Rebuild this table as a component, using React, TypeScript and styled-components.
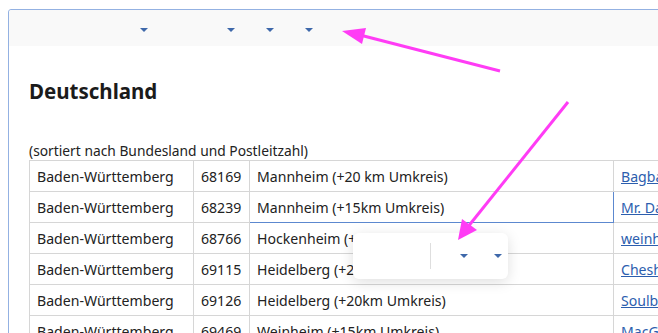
import styled, { createGlobalStyle } from 'styled-components';

const GlobalStyle = createGlobalStyle`
  html, body {
    margin: 0;
    padding: 0;
    background: #ffffff;
    overflow: hidden;
  }
  body {
    font-family: "Segoe UI", "Noto Sans", "Open Sans", sans-serif;
    color: #202020;
  }
`

const Page = styled.div`
  position: relative;
  width: 658px;
  height: 333px;
  overflow: hidden;
  padding: 9px 0 0 8px;
  box-sizing: border-box;
`

const Editor = styled.div`
  width: 700px;
  height: 400px;
  border: 1px solid #93b1e2;
  border-radius: 3px;
  box-sizing: border-box;
`

const Toolbar = styled.div`
  height: 36px;
  display: flex;
  align-items: center;
  background: #f9f9f9;
  border-radius: 3px 3px 0 0;
`

const Dropdown = styled.div<{ $width: number }>`
  width: ${p => p.$width}px;
  height: 24px;
  display: flex;
  align-items: center;
  justify-content: flex-end;
  padding-top: 3px;
  box-sizing: border-box;
`

const Caret = styled.span`
  width: 0;
  height: 0;
  border-left: 4px solid transparent;
  border-right: 4px solid transparent;
  border-top: 4px solid #3e68aa;
`

const Content = styled.div`
  padding: 0 0 0 20px;
`

const Heading = styled.h2`
  margin: 30px 0 0;
  font-size: 20.5px;
  line-height: 30px;
  font-weight: 700;
  color: #1b1b1b;
`

const Note = styled.p`
  margin: 36px 0 0;
  font-size: 13.8px;
  line-height: 17px;
  color: #222;
`

const Table = styled.table`
  margin-top: 1px;
  border-collapse: collapse;
  table-layout: fixed;
  width: 800px;
  font-size: 14.1px;
  color: #222;
`

const Cell = styled.td<{ $width?: number; $focused?: boolean }>`
  ${p => (p.$width ? `width: ${p.$width}px;` : '')}
  height: 31px;
  padding: 1px 7px 0;
  border: 1px solid ${p => (p.$focused ? '#5c88cf' : '#d6d6d6')};
  white-space: nowrap;
  overflow: hidden;
  box-sizing: border-box;
`

const Link = styled.a`
  color: #2c5eae;
  text-decoration: underline;
`

const Popup = styled.div`
  position: absolute;
  left: 353px;
  top: 233px;
  width: 155px;
  height: 46px;
  background: #ffffff;
  border-radius: 6px;
  box-shadow: 0 3px 14px rgba(0, 0, 0, 0.13);
  display: flex;
  align-items: center;
`

const Separator = styled.span`
  width: 1px;
  height: 26px;
  margin-left: 77px;
  background: #dedede;
`

const PopupDropdown = styled(Dropdown)`
  padding-top: 0;
`

const Annotations = styled.svg`
  position: absolute;
  left: 0;
  top: 0;
  pointer-events: none;
`

const rows = [
  ['Baden-Württemberg', '68169', 'Mannheim (+20 km Umkreis)', 'Bagbag Records'],
  ['Baden-Württemberg', '68239', 'Mannheim (+15km Umkreis)', 'Mr. Dart'],
  ['Baden-Württemberg', '68766', 'Hockenheim (+10km Umkreis)', 'weinheim'],
  ['Baden-Württemberg', '69115', 'Heidelberg (+20km Umkreis)', 'Cheshire'],
  ['Baden-Württemberg', '69126', 'Heidelberg (+20km Umkreis)', 'Soulbox'],
  ['Baden-Württemberg', '69469', 'Weinheim (+15km Umkreis)', 'MacGyver'],
];

const App = () => {
  return (
    <>
      <GlobalStyle />
      <Page>
        <Editor>
          <Toolbar>
            <Dropdown $width={139}><Caret /></Dropdown>
            <Dropdown $width={87}><Caret /></Dropdown>
            <Dropdown $width={39}><Caret /></Dropdown>
            <Dropdown $width={39}><Caret /></Dropdown>
          </Toolbar>
          <Content>
            <Heading>Deutschland</Heading>
            <Note>(sortiert nach Bundesland und Postleitzahl)</Note>
            <Table>
              <tbody>
                {rows.map((r, i) => (
                  <tr key={i}>
                    <Cell $width={164}>{r[0]}</Cell>
                    <Cell $width={56}>{r[1]}</Cell>
                    <Cell $width={364} $focused={i === 1}>{r[2]}</Cell>
                    <Cell><Link href="#">{r[3]}</Link></Cell>
                  </tr>
                ))}
              </tbody>
            </Table>
          </Content>
        </Editor>

        <Popup>
          <Separator />
          <PopupDropdown $width={37}><Caret /></PopupDropdown>
          <PopupDropdown $width={34}><Caret /></PopupDropdown>
        </Popup>

        <Annotations width="658" height="333" viewBox="0 0 658 333">
          <line x1="500" y1="71" x2="356" y2="34" stroke="#ff3cf5" strokeWidth="3" />
          <polygon points="342,31 366,28 362,44" fill="#ff3cf5" />
          <line x1="568" y1="102" x2="467" y2="228" stroke="#ff3cf5" strokeWidth="3" />
          <polygon points="458,240 462,219 477,230" fill="#ff3cf5" />
        </Annotations>
      </Page>
    </>
  );
};

export default App;
